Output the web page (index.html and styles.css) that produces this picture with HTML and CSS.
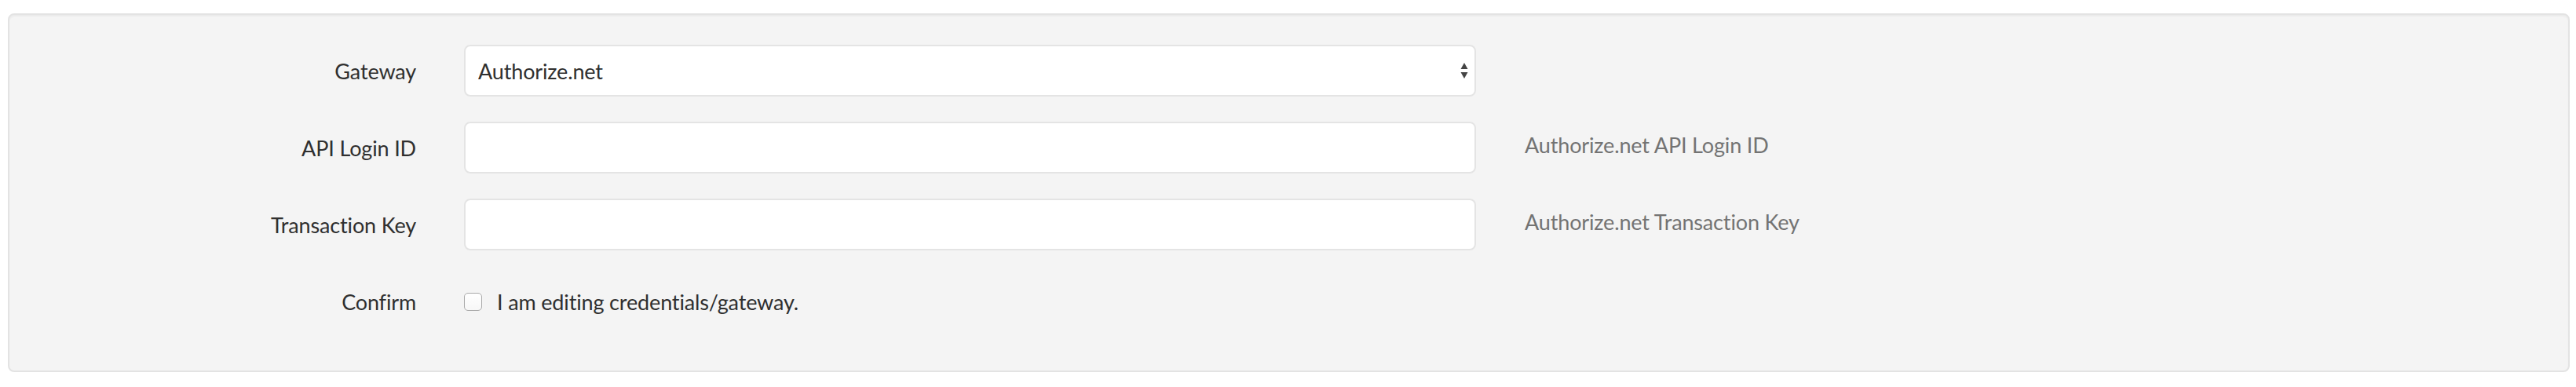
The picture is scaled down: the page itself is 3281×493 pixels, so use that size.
FILE: index.html
```html
<!DOCTYPE html>
<html lang="en">
<head>
    <meta charset="UTF-8">
    <meta name="viewport" content="width=device-width, initial-scale=1.0">
    <title>Payment Gateway</title>
    <link rel="stylesheet" href="styles.css">
</head>
<body>
    <div class="well">
        <form class="form-horizontal">
            <div class="form-row">
                <label class="form-label" for="gateway">Gateway</label>
                <div class="select-wrap">
                    <select id="gateway" class="form-control">
                        <option value="authorize">Authorize.net</option>
                    </select>
                    <svg class="select-arrows" width="10" height="22" viewBox="0 0 10 22">
                        <polygon points="0.5,9 5,1 9.5,9" />
                        <polygon points="0.5,13 5,21 9.5,13" />
                    </svg>
                </div>
            </div>
            <div class="form-row">
                <label class="form-label" for="login-id">API Login ID</label>
                <input id="login-id" class="form-control" type="text">
                <span class="help-block">Authorize.net API Login ID</span>
            </div>
            <div class="form-row">
                <label class="form-label" for="tx-key">Transaction Key</label>
                <input id="tx-key" class="form-control" type="text">
                <span class="help-block">Authorize.net Transaction Key</span>
            </div>
            <div class="form-row">
                <span class="form-label">Confirm</span>
                <label class="checkbox">
                    <input type="checkbox" name="confirm">
                    I am editing credentials/gateway.
                </label>
            </div>
        </form>
    </div>
</body>
</html>
```

FILE: styles.css
```css
body {
    margin: 17px 8px 0 10px;
    background: #fff;
    color: #2f2f2f;
    font-family: "Lato", "Liberation Sans", sans-serif;
    font-size: 27px;
    letter-spacing: -0.15px;
}
.well {
    background: #f4f4f4;
    border: 2px solid #e3e3e3;
    border-radius: 8px;
    box-shadow: inset 0 2px 2px rgba(0, 0, 0, 0.04);
    padding: 38px 0 55px;
}
.form-horizontal {
    display: flex;
    flex-direction: column;
    gap: 32px;
}
.form-row {
    display: grid;
    grid-template-columns: 518px 1289px auto;
    column-gap: 61px;
    align-items: center;
    height: 66px;
}
.form-label {
    text-align: right;
}
.form-control {
    width: 100%;
    height: 66px;
    box-sizing: border-box;
    margin: 0;
    padding: 0 16px;
    background: #fff;
    border: 2px solid #e4e4e4;
    border-radius: 8px;
    color: #2f2f2f;
    font: inherit;
    letter-spacing: inherit;
    outline: none;
}
select.form-control {
    appearance: none;
    -webkit-appearance: none;
}
.select-wrap {
    position: relative;
}
.select-arrows {
    position: absolute;
    right: 10px;
    top: 22px;
    fill: #444;
}
.help-block {
    align-self: start;
    margin-top: 10px;
    padding-left: 1px;
    line-height: 40px;
    color: #737373;
}
.checkbox {
    display: flex;
    align-items: center;
    gap: 19px;
}
.checkbox input {
    appearance: none;
    -webkit-appearance: none;
    width: 23px;
    height: 23px;
    margin: 0;
    background: linear-gradient(#fff, #f7f7f7);
    border: 1.5px solid #a9a9a9;
    border-radius: 5px;
}
```
